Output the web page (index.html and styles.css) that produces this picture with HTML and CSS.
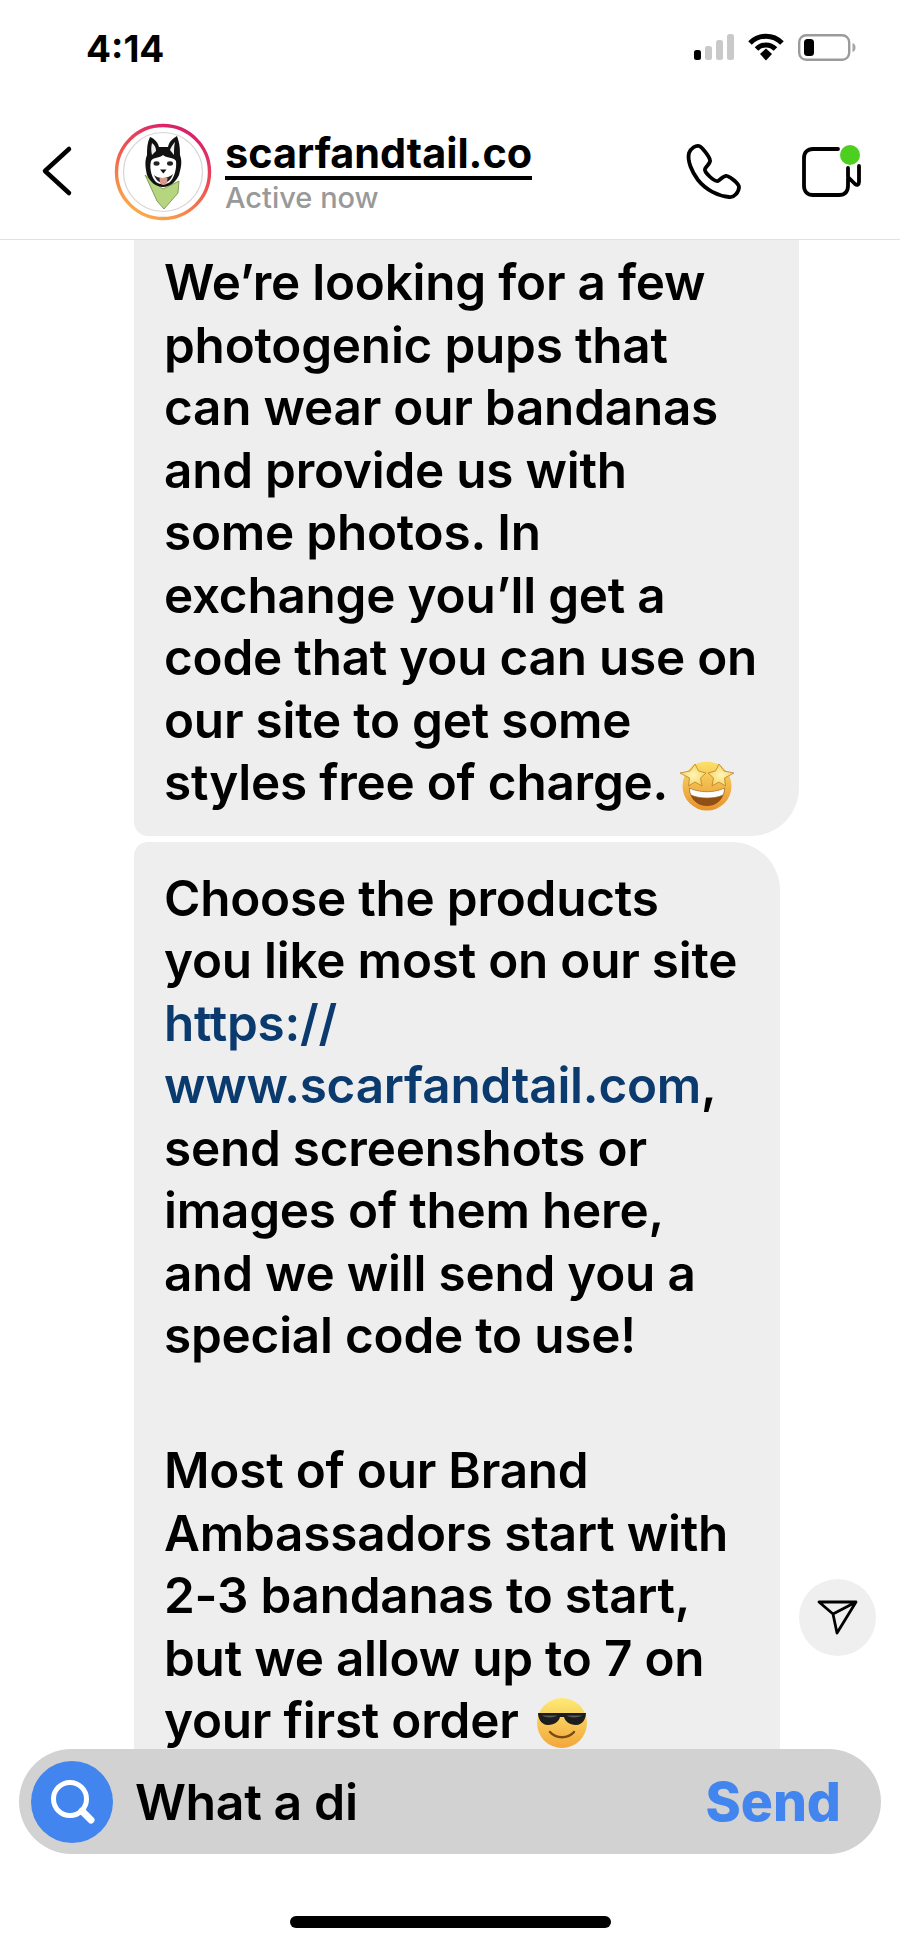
FILE: index.html
```html
<!DOCTYPE html>
<html lang="en">
<head>
<meta charset="utf-8">
<title>scarfandtail.co</title>
<link rel="stylesheet" href="styles.css">
</head>
<body>
<div class="phone">
  <div class="status">
    <span class="time">4:14</span>
    <div class="status-icons">
      <svg class="signal" viewBox="0 0 40 26" width="40" height="26">
        <rect x="0" y="16" width="7" height="10" rx="2.5" fill="#000"/>
        <rect x="11" y="12" width="7" height="14" rx="2.5" fill="#c9c9c9"/>
        <rect x="22" y="6" width="7" height="20" rx="2.5" fill="#c9c9c9"/>
        <rect x="33" y="0" width="7" height="26" rx="2.5" fill="#c9c9c9"/>
      </svg>
      <svg class="wifi" viewBox="0 0 36 28" width="36" height="28">
        <path d="M2 10 C11 1 25 1 34 10" fill="none" stroke="#000" stroke-width="5"/>
        <path d="M8.5 16 C14 10.5 22 10.5 27.5 16" fill="none" stroke="#000" stroke-width="5"/>
        <path d="M12 21 L18 15.5 L24 21 L18 27.5 Z" fill="#000"/>
      </svg>
      <svg class="battery" viewBox="0 0 58 27" width="58" height="27">
        <rect x="1.2" y="1.2" width="50" height="24.6" rx="7" fill="none" stroke="#9b9b9b" stroke-width="2.4"/>
        <rect x="6" y="5" width="10" height="17" rx="3.5" fill="#000"/>
        <path d="M54.5 9 C57 10 57.5 11.500 57.500 13.500 C57.500 15.500 57 17 54.500 18 Z" fill="#a5a5a5"/>
      </svg>
    </div>
  </div>

  <header class="header">
    <svg class="back" viewBox="0 0 34 52" width="34" height="52">
      <path d="M28 4 L4 26 L28 48" fill="none" stroke="#000" stroke-width="4.500" stroke-linecap="round" stroke-linejoin="round"/>
    </svg>
    <svg class="avatar" viewBox="0 0 98 98" width="98" height="98">
      <defs>
        <linearGradient id="ring" x1="0.25" y1="1" x2="0.75" y2="0">
          <stop offset="0" stop-color="#fbb049"/>
          <stop offset="0.5" stop-color="#ee5b4f"/>
          <stop offset="1" stop-color="#d8196e"/>
        </linearGradient>
      </defs>
      <circle cx="49" cy="49" r="46.500" fill="#fff" stroke="url(#ring)" stroke-width="3.400"/>
      <circle cx="49" cy="49" r="39.500" fill="#fff" stroke="#d6d6d6" stroke-width="1.200"/>
      <path d="M33 56 L31 52 L49 66 L65 58 L64 70 L50 86 L43 78 Z" fill="#b5d67e" stroke="#6e8a45" stroke-width="0.800"/>
      <path d="M36 14 C41 16 44 20 45 24 L54 24 C55 19 58 16 63 13 C66 21 66 27 66 32 C69 40 66 47 65 52 C62 59 56 64 49 64 C42 64 36 59 33 52 C32 47 30 39 33 32 C33 26 33 20 36 14 Z" fill="#111"/>
      <path d="M38 20 C41 22 42 25 42 28 L38 32 C37 28 37 24 38 20 Z M61 19 C60 23 60 28 60 32 L56 27 C57 24 59 21 61 19 Z" fill="#eee"/>
      <path d="M49 32 C52 35 60 34 62 38 C63 46 60 55 56 59 C52 62 46 62 42 59 C38 55 35 46 37 38 C39 34 46 35 49 32 Z" fill="#fff"/>
      <ellipse cx="42.500" cy="40.500" rx="3" ry="2.200" fill="#222"/>
      <ellipse cx="56" cy="40.500" rx="3" ry="2.200" fill="#222"/>
      <path d="M46 46.500 L52.500 46.500 L49.300 50.500 Z" fill="#111"/>
      <path d="M40 52 C44 56 54 56 59 51 C57 57 53 60 49.500 60 C45 60 42 57 40 52 Z" fill="#222"/>
      <path d="M45.500 55 L53.500 55 L53 60 C52 62.500 47 62.500 46 60 Z" fill="#d99a8e"/>
    </svg>
    <div class="who">
      <span class="name">scarfandtail.co</span>
      <span class="active">Active now</span>
    </div>
    <div class="actions">
      <svg class="call" viewBox="0 0 58 58" width="58" height="58">
        <path d="M5 10 C7 5 12 2 15 3 C18 4 25 13 26 17 C27 20 22 23 21 26 C20 29 30 39 34 38 C37 36 40 32 43 33 C47 34 55 41 55 44 C55 49 50 55 45 54 C34 53 22 47 14 37 C8 29 3 18 5 10 Z" fill="none" stroke="#000" stroke-width="3.800" stroke-linejoin="round"/>
      </svg>
      <svg class="video" viewBox="0 0 61 56" width="61" height="56">
        <path d="M37 5 L12 5 C6.500 5 3 8.500 3 14 L3 42 C3 47.500 6.500 51 12 51 L38 51 C44 51 47 47.500 47 42 L47 24 M47 33 L54 40 C56 41.500 58 41 58 38 L58 22" fill="none" stroke="#000" stroke-width="3.800" stroke-linecap="round" stroke-linejoin="round"/>
        <circle class="video-dot" cx="49" cy="11" r="10"/>
      </svg>
    </div>
  </header>

  <main class="chat">
    <div class="bubble bubble-first">We’re looking for a few<br>photogenic pups that<br>can wear our bandanas<br>and provide us with<br>some photos. In<br>exchange you’ll get a<br>code that you can use on<br>our site to get some<br>styles free of charge. <svg class="emoji" viewBox="0 0 56 52" width="56" height="52">
        <defs>
          <linearGradient id="face1" x1="0" y1="0" x2="0" y2="1"><stop offset="0" stop-color="#fbe06a"/><stop offset="1" stop-color="#e8912c"/></linearGradient>
          <radialGradient id="star" cx="0.5" cy="0.5" r="0.600"><stop offset="0" stop-color="#fff6bb"/><stop offset="1" stop-color="#f6cf54"/></radialGradient>
        </defs>
        <circle cx="28" cy="27" r="24.500" fill="url(#face1)"/>
        <path d="M10 29 C20 34 36 34 46 29 C45 41 37 47 28 47 C19 47 11 41 10 29 Z" fill="#8e5016"/>
        <path d="M10.500 29 C20 34 36 34 45.500 29 C45.500 33 44.500 35 44 36 C36 40 20 40 12 36 C11.500 35 10.500 33 10.500 29 Z" fill="#fff" stroke="#9c6a1e" stroke-width="0.600"/>
        <path d="M16 5 L19.500 12 L27 14 L21.500 19 L23 27 L16 23 L9.500 27 L10.500 19 L1 14 L11 12 Z" fill="url(#star)" stroke="#b9822a" stroke-width="0.800" stroke-linejoin="round"/>
        <path d="M40 5 L45 12 L55 14 L45.500 19 L46.500 27 L40 23 L33 27 L34.500 19 L29 14 L36.500 12 Z" fill="url(#star)" stroke="#b9822a" stroke-width="0.800" stroke-linejoin="round"/>
      </svg></div>
    <div class="bubble bubble-second">
      <p class="para">Choose the products<br>you like most on our site<br><span class="link">https://<br>www.scarfandtail.com</span>,<br>send screenshots or<br>images of them here,<br>and we will send you a<br>special code to use!</p>
      <p class="para">Most of our Brand<br>Ambassadors start with<br>2-3 bandanas to start,<br>but we allow up to 7 on<br>your first order <svg class="emoji emoji-spaced" viewBox="0 0 52 52" width="52" height="52">
        <defs>
          <linearGradient id="face2" x1="0" y1="0" x2="0" y2="1"><stop offset="0" stop-color="#fdea74"/><stop offset="1" stop-color="#f2a63a"/></linearGradient>
        </defs>
        <circle cx="26" cy="26" r="25" fill="url(#face2)"/>
        <path d="M2 16 L50 16 C50 21 47 28 40 28 C33 28 29 24 28 20 L24 20 C23 24 19 28 12 28 C5 28 2 21 2 16 Z" fill="#1d1d1d"/>
        <path d="M6 18.500 L21 18.500 C20 20 12 22 6 18.500 Z M31 18.500 L46 18.500 C40 22 32 20 31 18.500 Z" fill="#5b5b5b"/>
        <path d="M14 35 C20 42 32 42 38 35" fill="none" stroke="#7b4a14" stroke-width="2.400" stroke-linecap="round"/>
      </svg></p>
    </div>
  </main>

  <button class="fab" type="button" aria-label="Share">
    <svg viewBox="0 0 42 38" width="42" height="38">
      <path d="M2 3 L39 3 L20 34 L16 15 Z M16 15 L39 3" fill="none" stroke="#000" stroke-width="2.800" stroke-linejoin="round"/>
    </svg>
  </button>

  <div class="composer">
    <span class="search">
      <svg viewBox="0 0 82 82" width="82" height="82">
        <circle cx="39" cy="38" r="16.500" fill="none" stroke="#fff" stroke-width="5"/>
        <path d="M51 50 L60 59" stroke="#fff" stroke-width="7" stroke-linecap="round"/>
      </svg>
    </span>
    <span class="draft">What a di</span>
    <span class="send">Send</span>
  </div>
  <div class="home-bar"></div>
</div>
</body>
</html>
```
FILE: styles.css
```css
* { box-sizing: border-box; }
html, body { margin: 0; padding: 0; background: #fff; }
body { font-family: Inter, "Liberation Sans", sans-serif; color: #000; }

.phone {
  position: relative;
  width: 900px;
  height: 1948px;
  display: flex;
  flex-direction: column;
  overflow: hidden;
}

.status {
  height: 100px;
  padding: 31px 44px 0 86px;
  display: flex;
  justify-content: space-between;
  align-items: flex-start;
}
.time { font-size: 37px; font-weight: 700; line-height: 36px; }
.status-icons { display: flex; align-items: center; gap: 14px; padding-top: 2px; }

.header {
  height: 140px;
  flex: none;
  display: flex;
  align-items: center;
  padding: 0 38px 0 41px;
  border-bottom: 1.5px solid #e2e2e2;
}
.back { flex: none; margin-top: 3px; }
.avatar { flex: none; margin: 4px 0 0 39px; }
.who { display: flex; flex-direction: column; margin: 7px 0 0 13px; }
.name {
  font-size: 41.400px;
  font-weight: 700;
  line-height: 46px;
  border-bottom: 4.500px solid #000;
}
.active { font-size: 29px; font-weight: 500; line-height: 36px; color: #999; }
.actions { margin-left: auto; display: flex; align-items: center; gap: 59px; margin-top: 4px; }
.video-dot { fill: #4ccf1f; }

.chat {
  flex: 1;
  min-height: 0;
  overflow: hidden;
  padding-left: 134px;
  display: flex;
  flex-direction: column;
  align-items: flex-start;
  gap: 6px;
}
.bubble {
  background: #eee;
  font-size: 49.400px;
  font-weight: 600;
  letter-spacing: -0.200px;
  line-height: 62.500px;
  padding-left: 30px;
  white-space: nowrap;
}
.bubble-first {
  width: 665px;
  flex: none;
  padding-top: 11px;
  padding-bottom: 22px;
  border-radius: 0 0 48px 14px;
}
.bubble-second {
  width: 646px;
  flex: none;
  padding-top: 25px;
  padding-bottom: 60px;
  border-radius: 14px 48px 0 0;
}
.para { margin: 0; }
.para + .para { margin-top: 72.500px; }
.link { color: #0b3a6e; }
.emoji { vertical-align: -11px; }
.emoji-spaced { margin-left: 5px; }

.fab {
  position: absolute;
  left: 799px;
  top: 1579px;
  width: 77px;
  height: 77px;
  padding: 0;
  border: 0;
  border-radius: 50%;
  background: #efefef;
  display: flex;
  align-items: center;
  justify-content: center;
}

.composer {
  flex: none;
  height: 105px;
  margin: 0 19px;
  padding: 0 40px 0 12px;
  border-radius: 53px;
  background: #d2d2d2;
  display: flex;
  align-items: center;
}
.search { flex: none; width: 82px; height: 82px; border-radius: 50%; background: #4285ee; display: block; }
.search svg { display: block; }
.draft { margin-left: 22px; font-size: 50px; font-weight: 600; letter-spacing: -0.400px; }
.send { margin-left: auto; font-size: 53.500px; font-weight: 800; color: #4285ee; }

.home-bar {
  flex: none;
  width: 321px;
  height: 12px;
  margin: 62px auto 20px;
  border-radius: 6px;
  background: #000;
}
```
